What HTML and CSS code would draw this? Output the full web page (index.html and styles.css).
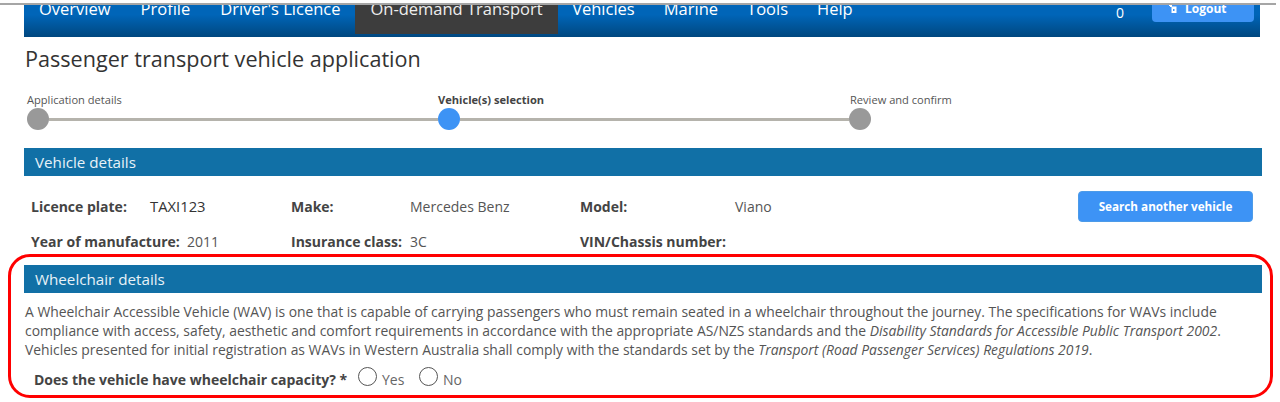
FILE: index.html
```html
<!DOCTYPE html>
<html lang="en">
<head>
    <meta charset="UTF-8">
    <title>Passenger transport vehicle application</title>
    <link rel="stylesheet" href="styles.css">
</head>
<body>
<div class="topline"></div>
<div class="nav">
    <div class="menu">
        <a class="item">Overview</a>
        <a class="item">Profile</a>
        <a class="item">Driver's Licence</a>
        <a class="item active">On-demand Transport</a>
        <a class="item tail">Vehicles</a>
        <a class="item tail">Marine</a>
        <a class="item tail">Tools</a>
        <a class="item tail">Help</a>
    </div>
    <div class="nav-right">
        <span class="count">0</span>
        <a class="logout">
            <svg class="logout-icon" viewBox="0 0 10 10"><path d="M1 1h3v1.500h4.500v6.500h-5v-6h-1.500v-1h-1z" fill="#fff"/><rect x="5" y="5" width="1.500" height="2" fill="#3d93f5"/></svg>
            Logout
        </a>
    </div>
</div>

<h1 class="title">Passenger transport vehicle application</h1>

<div class="steps">
    <div class="step-labels">
        <span>Application details</span>
        <span class="current">Vehicle(s) selection</span>
        <span>Review and confirm</span>
    </div>
    <div class="step-track">
        <span class="dot"></span>
        <span class="line"></span>
        <span class="dot dot-on"></span>
        <span class="line"></span>
        <span class="dot"></span>
    </div>
</div>

<div class="bar">Vehicle details</div>
<div class="details">
    <div class="fields">
        <div class="field"><b class="plate-label">Licence plate:</b><span class="dark">TAXI123</span></div>
        <div class="field"><b class="make-label">Make:</b><span>Mercedes Benz</span></div>
        <div class="field"><b class="model-label">Model:</b><span>Viano</span></div>
        <div class="field"><b class="year-label">Year of manufacture:</b><span>2011</span></div>
        <div class="field"><b class="make-label">Insurance class:</b><span>3C</span></div>
        <div class="field"><b>VIN/Chassis number:</b></div>
    </div>
    <button class="search">Search another vehicle</button>
</div>

<div class="wheelchair">
    <div class="bar bar-inner">Wheelchair details</div>
    <p class="about">A Wheelchair Accessible Vehicle (WAV) is one that is capable of carrying passengers who must remain seated in a wheelchair throughout the journey. The specifications for WAVs include<br>
    compliance with access, safety, aesthetic and comfort requirements in accordance with the appropriate AS/NZS standards and the <i>Disability Standards for Accessible Public Transport 2002</i>.<br>
    Vehicles presented for initial registration as WAVs in Western Australia shall comply with the standards set by the <i>Transport (Road Passenger Services) Regulations 2019</i>.</p>
    <div class="question">
        <b>Does the vehicle have wheelchair capacity? *</b>
        <span class="radio"></span><span class="opt">Yes</span>
        <span class="radio"></span><span class="opt">No</span>
    </div>
</div>
</body>
</html>
```

FILE: styles.css
```css
*{
    margin:0;
    padding:0;
    box-sizing:border-box;
}
body{
    background-color:#fff;
    font-family:"Open Sans",sans-serif;
    color:#555;
    overflow:hidden;
}
.topline{
    height:5px;
    margin-right:4px;
    background-color:#fdfdfd;
    border-bottom:2px solid #a5a5a5;
}
.nav{
    display:flex;
    justify-content:space-between;
    height:32px;
    margin:0 20px 0 24px;
    overflow:hidden;
    background:linear-gradient(#0065b8 30%,#00477f);
}
.menu{
    display:flex;
    height:29px;
}
.item{
    height:42px;
    margin-top:-13px;
    padding:5px 15px 0;
    font-size:16.5px;
    line-height:24px;
    color:#fff;
    white-space:nowrap;
}
.tail{
    padding:5px 14.5px 0;
}
.active{
    background-color:#3d3d3d;
    color:#eee;
}
.nav-right{
    display:flex;
    margin-right:6px;
}
.count{
    margin:-4px 28px 0 0;
    font-size:14px;
    line-height:24px;
    color:#fff;
}
.logout{
    display:flex;
    align-items:flex-end;
    gap:7px;
    width:102px;
    height:17px;
    padding:0 0 7px 16px;
    border-radius:0 0 4px 4px;
    background-color:#3d93f5;
    color:#fff;
    font-size:12px;
    line-height:12px;
    font-weight:700;
}
.logout-icon{
    width:10px;
    height:10px;
    margin-bottom:1px;
}
.title{
    margin:7px 0 0 25px;
    font-size:21.6px;
    line-height:30px;
    font-weight:400;
    color:#333;
}
.steps{
    margin:19px 0 0 27px;
    width:844px;
}
.step-labels{
    display:grid;
    grid-template-columns:411px 412px auto;
    font-size:11.1px;
    line-height:14px;
    white-space:nowrap;
}
.current{
    font-weight:700;
    color:#444;
}
.step-track{
    display:flex;
    align-items:center;
    height:22px;
    margin-top:1px;
}
.dot{
    flex:none;
    width:22px;
    height:22px;
    border-radius:50%;
    background-color:#999;
}
.dot-on{
    background-color:#3d93f5;
}
.line{
    flex:1;
    height:3px;
    background-color:#b5b3ac;
}
.bar{
    height:28px;
    margin:18px 18px 0 24px;
    padding-left:11px;
    background-color:#1170a6;
    color:#e8f2f8;
    font-size:15.2px;
    line-height:29px;
}
.details{
    display:flex;
    justify-content:space-between;
    margin:15px 27px 0 31px;
}
.fields{
    display:grid;
    grid-template-columns:260px 289px 300px;
    row-gap:17px;
    font-size:14px;
    line-height:18px;
    padding-top:7px;
}
.field{
    display:flex;
    white-space:nowrap;
}
.field b{
    color:#444;
}
.plate-label{
    width:119px;
}
.year-label{
    width:156px;
}
.make-label{
    width:119px;
}
.model-label{
    width:155px;
}
.dark{
    font-size:14.8px;
    line-height:17px;
    color:#333;
}
.search{
    width:175px;
    height:31px;
    padding-bottom:2px;
    border:1px solid #4d9be8;
    border-radius:4px;
    background-color:#3d93f5;
    color:#fff;
    font-family:"Open Sans",sans-serif;
    font-size:11.7px;
    font-weight:700;
}
.wheelchair{
    height:144px;
    margin:3px 7px 0 8px;
    padding:8px 0 0;
    border:3px solid #f00;
    border-radius:22px;
}
.bar-inner{
    margin:0 8px 0 13px;
}
.about{
    margin:9px 0 0 14px;
    font-size:13.9px;
    line-height:19px;
    color:#555;
    white-space:nowrap;
}
.question{
    display:flex;
    align-items:center;
    margin:10px 0 0 23px;
    font-size:14px;
    line-height:20px;
}
.question b{
    width:324px;
    color:#444;
}
.radio{
    width:19px;
    height:19px;
    margin-top:-6px;
    border:1px solid #555;
    border-radius:50%;
}
.opt{
    width:42px;
    padding:1px 0 0 5px;
    font-size:14px;
    color:#666;
}
```
